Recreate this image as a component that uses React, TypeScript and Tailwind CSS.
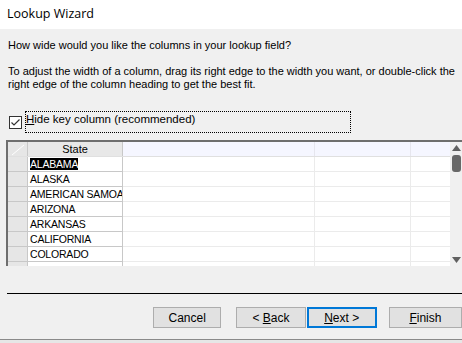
import React from 'react';

const states = ['ALABAMA', 'ALASKA', 'AMERICAN SAMOA', 'ARIZONA', 'ARKANSAS', 'CALIFORNIA', 'COLORADO', ''];

const Btn = ({ children, focused }: { children: React.ReactNode; focused?: boolean }) => (
  <button
    className={
      'w-full h-[21px] bg-[#e1e1e1] text-[12px] text-black flex items-center justify-center ' +
      (focused ? 'border-2 border-[#0078d7]' : 'border border-[#adadad]')
    }
  >
    <span>{children}</span>
  </button>
);

export default function App() {
  return (
    <div
      className="w-[462px] h-[343px] overflow-hidden bg-[#f0f0f0] flex flex-col text-black"
      style={{ fontFamily: '"Liberation Sans", Arial, sans-serif' }}
    >
      <div className="h-[29px] bg-white flex items-center pl-[7px] text-[12.5px] shrink-0" style={{ fontFamily: '"Open Sans", "Noto Sans", sans-serif' }}>
        Lookup Wizard
      </div>

      <div className="flex flex-col pl-[8px] text-[11px] leading-[13px]">
        <p className="mt-[10px]">How wide would you like the columns in your lookup field?</p>
        <p className="mt-[13px] whitespace-nowrap">
          To adjust the width of a column, drag its right edge to the width you want, or double-click the
          <br />
          right edge of the column heading to get the best fit.
        </p>

        <div className="mt-[20px] flex items-center">
          <div className="w-[13px] h-[13px] ml-[1px] border border-[#333] bg-white flex items-center justify-center">
            <svg width="11" height="11" viewBox="0 0 11 11">
              <path d="M1.5 5.5 L4 8 L9.5 2.5" stroke="#333" strokeWidth="1.2" fill="none" />
            </svg>
          </div>
          <div className="ml-[3px] w-[326px] h-[22px] border border-dotted border-black flex items-start pt-[1px]">
            <span className="text-[11.5px]"><span className="underline">H</span>ide key column (recommended)</span>
          </div>
        </div>
      </div>

      <div className="mt-[7px] ml-[6px] h-[126px] flex border-t-2 border-l-2 border-[#6e6e6e] overflow-hidden shrink-0">
        <div className="flex flex-col w-[444px] overflow-hidden">
          <div className="flex h-[15px] shrink-0 border-b border-[#e0e0e0] text-[11px]">
            <div className="w-[20px] bg-[#e6e6e6] border-r border-[#c8c8c8] relative overflow-hidden">
              <svg width="20" height="15" className="absolute left-0 top-0">
                <path d="M4 13 L16 3" stroke="#fff" strokeWidth="1" />
              </svg>
            </div>
            <div className="w-[95px] bg-[#e8e8e8] border-r border-[#c8c8c8] flex items-center justify-center">State</div>
            <div className="w-[192px] bg-[#f5f6ff] border-r border-[#e6e6ee]" />
            <div className="w-[96px] bg-[#f5f6ff] border-r border-[#e6e6ee]" />
            <div className="flex-1 bg-[#f5f6ff]" />
          </div>
          {states.map((s, i) => (
            <div key={i} className="flex h-[15px] shrink-0 text-[10.5px] leading-[14px] tracking-[-0.2px]">
              <div className="w-[20px] bg-[#e6e6e6] border-r border-b border-[#c8c8c8] shrink-0" />
              <div className="w-[95px] bg-white border-r border-b border-[#c8c8c8] pl-[2px] whitespace-nowrap overflow-hidden shrink-0">
                {i === 0 ? <span className="bg-black text-white">{s}</span> : s}
              </div>
              <div className="w-[192px] bg-white border-r border-b border-[#ebebeb] shrink-0" />
              <div className="w-[96px] bg-white border-r border-b border-[#ebebeb] shrink-0" />
              <div className="flex-1 bg-white border-b border-[#ebebeb]" />
            </div>
          ))}
        </div>
        <div className="w-[12px] bg-[#f0f0f0] flex flex-col items-center pt-[3px] pb-[3px] justify-between">
          <div className="flex flex-col items-center gap-[4px]">
            <svg width="9" height="6" viewBox="0 0 9 6">
              <path d="M4.5 0 L9 6 L0 6 Z" fill="#606060" />
            </svg>
            <div className="w-[9px] h-[17px] rounded-[3px] bg-[#686868]" />
          </div>
          <svg width="9" height="6" viewBox="0 0 9 6">
            <path d="M0 0 L9 0 L4.5 6 Z" fill="#606060" />
          </svg>
        </div>
      </div>

      <div className="mt-[27px] ml-[7px] h-px bg-black shrink-0" />

      <div className="mt-[13px] flex text-[12px] shrink-0">
        <div className="ml-[153px] w-[70px]"><Btn>Cancel</Btn></div>
        <div className="ml-[15px] w-[71px]"><Btn>&lt; <span className="underline">B</span>ack</Btn></div>
        <div className="ml-[1px] w-[72px]"><Btn focused><span className="underline">N</span>ext &gt;</Btn></div>
        <div className="ml-[12px] w-[75px]"><Btn><span className="underline">F</span>inish</Btn></div>
      </div>

      <div className="mt-[11px] h-px bg-[#8a8a8a] shrink-0" />
      <div className="flex-1 bg-[#e6e6e6]" />
    </div>
  );
}
